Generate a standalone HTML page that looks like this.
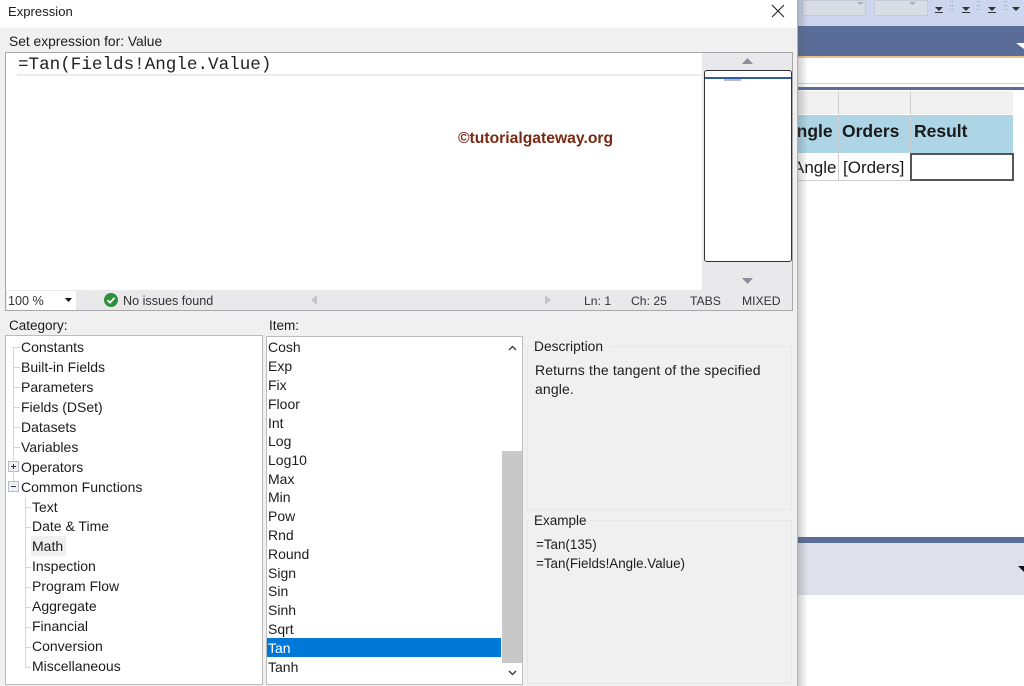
<!DOCTYPE html>
<html><head><meta charset="utf-8"><style>
html,body{margin:0;padding:0;width:1024px;height:686px;overflow:hidden;background:#fff;font-family:"Liberation Sans",sans-serif;color:#1c1c1c}
div,span{position:absolute;box-sizing:border-box}
.t{white-space:nowrap;font-size:14px;line-height:18px}
.c{left:21px}.s{left:32px}.i{left:268px}
.m{font-family:"Liberation Sans",sans-serif;font-weight:bold;font-size:17.5px;line-height:20px;height:20px;white-space:nowrap;color:#1a1a1a}
.r{font-weight:normal;font-size:17px}
.st{font-size:12.2px;color:#333;top:292px}
</style></head><body>
<!-- background app -->
<div style="left:798px;top:0;width:226px;height:26px;background:#ccd6ee"></div>
<div style="left:802px;top:0;width:64px;height:16px;background:#d9dde6;border:1px solid #c4cad8"></div>
<div style="left:874px;top:0;width:54px;height:16px;background:#d9dde6;border:1px solid #c4cad8"></div>
<svg style="position:absolute;left:854px;top:1px" width="70" height="5"><path d="M3 1h7L6.500 4zM55 1h7L58.500 4z" fill="#a8adb8"/></svg>
<svg style="position:absolute;left:930px;top:0" width="94" height="16"><g fill="#333"><path d="M5 7h8l-4 4zM32 7h8l-4 4zM58 7h8l-4 4zM82 7h8l-4 4z"/><rect x="5" y="12" width="8" height="1"/><rect x="32" y="12" width="8" height="1"/><rect x="58" y="12" width="8" height="1"/></g><g fill="#99a"><rect x="20" y="1" width="1" height="1"/><rect x="22" y="1" width="1" height="1"/><rect x="20" y="5" width="1" height="1"/><rect x="22" y="5" width="1" height="1"/><rect x="20" y="9" width="1" height="1"/><rect x="22" y="9" width="1" height="1"/><rect x="47" y="1" width="1" height="1"/><rect x="49" y="1" width="1" height="1"/><rect x="47" y="5" width="1" height="1"/><rect x="49" y="5" width="1" height="1"/><rect x="47" y="9" width="1" height="1"/><rect x="49" y="9" width="1" height="1"/><rect x="74" y="1" width="1" height="1"/><rect x="76" y="1" width="1" height="1"/><rect x="74" y="5" width="1" height="1"/><rect x="76" y="5" width="1" height="1"/><rect x="74" y="9" width="1" height="1"/><rect x="76" y="9" width="1" height="1"/></g></svg>
<div style="left:798px;top:26px;width:226px;height:30px;background:#5a6c98"></div>
<div style="left:798px;top:56px;width:226px;height:2px;background:#e8c48a"></div>
<svg style="position:absolute;left:1016px;top:43px" width="8" height="7"><path d="M0 0h8v6z" fill="#fff"/></svg>
<div style="left:798px;top:83px;width:226px;height:1px;background:#d4d4d4"></div>
<div style="left:798px;top:87px;width:226px;height:3px;background:#5a6c98"></div>
<div style="left:798px;top:91px;width:40px;height:23px;background:#f0f0f0"></div>
<div style="left:839px;top:91px;width:71px;height:23px;background:#f0f0f0"></div>
<div style="left:911px;top:91px;width:102px;height:23px;background:#f0f0f0"></div>
<div style="left:798px;top:115px;width:215px;height:38px;background:#add5e6"></div>
<div style="left:838px;top:91px;width:1px;height:89px;background:#cfcfcf"></div>
<div style="left:910px;top:91px;width:1px;height:62px;background:#cfcfcf"></div>
<div style="left:798px;top:180px;width:112px;height:1px;background:#cfcfcf"></div>
<div class="m" style="left:798px;top:121px;width:38px;overflow:hidden"><span style="left:-14px;top:0">Angle</span></div>
<div class="m" style="left:842px;top:121px">Orders</div>
<div class="m" style="left:914px;top:121px">Result</div>
<div class="m r" style="left:798px;top:158px;width:38px;overflow:hidden"><span style="left:-5px;top:0">Angle</span></div>
<div class="m r" style="left:843px;top:158px">[Orders]</div>
<div style="left:910px;top:153px;width:104px;height:28px;background:#fff;border:2px solid #555"></div>
<div style="left:798px;top:537px;width:226px;height:6px;background:#5a6c98"></div>
<div style="left:798px;top:543px;width:226px;height:52px;background:#dee1ea"></div>
<svg style="position:absolute;left:1018px;top:566px" width="6" height="7"><path d="M0 0h6v6z" fill="#111"/></svg>
<!-- dialog shadow -->
<div style="left:796px;top:0;width:12px;height:686px;background:linear-gradient(90deg,rgba(90,90,90,.35),rgba(150,150,150,0))"></div>
<!-- dialog -->
<div style="left:0;top:0;width:798px;height:686px;background:#f0f0f0;border-right:1px solid #b0b0b0"></div>
<div style="left:0;top:0;width:797px;height:28px;background:#fff"></div>
<div class="t" style="left:8px;top:3px;font-size:13.1px">Expression</div>
<svg style="position:absolute;left:771px;top:4px" width="14" height="14"><path d="M1 1L13 13M13 1L1 13" stroke="#222" stroke-width="1.1" fill="none"/></svg>
<div class="t" style="left:9px;top:33px;font-size:13.8px">Set expression for: Value</div>
<!-- editor -->
<div style="left:5px;top:52px;width:788px;height:259px;background:#fff;border:1px solid #a8a8a8"></div>
<div style="left:17px;top:54px;width:685px;height:22px;background:#fff;border-bottom:2px solid #ececec"></div>
<div style="left:18px;top:55px;font-family:'Liberation Mono',monospace;font-size:17.6px;line-height:20px;white-space:nowrap;color:#222">=Tan(Fields!Angle.Value)</div>
<div style="left:702px;top:53px;width:90px;height:237px;background:#e9e9ec"></div>
<div style="left:702px;top:262px;width:90px;height:28px;background:#e9e9ec"></div>
<svg style="position:absolute;left:741px;top:57px" width="13" height="8"><path d="M1 7L6.500 1L12 7z" fill="#8a8f99"/></svg>
<svg style="position:absolute;left:741px;top:277px" width="13" height="8"><path d="M1 1L6.500 7L12 1z" fill="#8a8f99"/></svg>
<div style="left:704px;top:70px;width:88px;height:192px;background:#fff;border:1px solid #333;border-radius:3px"></div>
<div style="left:705px;top:77px;width:86px;height:2px;background:#2f5da8"></div>
<div style="left:724px;top:79px;width:17px;height:2px;background:#b5b8c8"></div>
<!-- status -->
<div style="left:6px;top:290px;width:786px;height:20px;background:#e9e9ec"></div>
<div style="left:7px;top:291px;width:69px;height:19px;background:#fff"></div>
<div class="t" style="left:8px;top:292px;font-size:12.6px;color:#333">100 %</div>
<svg style="position:absolute;left:65px;top:298px" width="8" height="5"><path d="M0 0h7l-3.500 4z" fill="#111"/></svg>
<svg style="position:absolute;left:104px;top:293px" width="14" height="14"><circle cx="7" cy="7" r="7" fill="#2d8f3c"/><path d="M3.500 7.200L6 9.700L10.500 4.800" stroke="#fff" stroke-width="1.800" fill="none"/></svg>
<div class="t" style="left:123px;top:292px;font-size:12.6px;color:#333">No issues found</div>
<svg style="position:absolute;left:311px;top:295px" width="7" height="10"><path d="M6 0v10L0 5z" fill="#c4c4c8"/></svg>
<svg style="position:absolute;left:545px;top:295px" width="7" height="10"><path d="M0 0v10L6 5z" fill="#c4c4c8"/></svg>
<div class="t st" style="left:584px">Ln: 1</div>
<div class="t st" style="left:631px">Ch: 25</div>
<div class="t st" style="left:690px">TABS</div>
<div class="t st" style="left:742px">MIXED</div>
<!-- labels -->
<div class="t" style="left:9px;top:317px;font-size:13.5px">Category:</div>
<div class="t" style="left:269px;top:317px;font-size:13.5px">Item:</div>
<!-- category tree -->
<div style="left:5px;top:335px;width:258px;height:350px;background:#fff;border:1px solid #bcbcbc"></div>
<div style="left:13px;top:347px;width:1px;height:135px;background:#d6d6d6"></div>
<div style="left:25px;top:497px;width:1px;height:171px;background:#d6d6d6"></div>
<div style="left:13px;top:347px;width:7px;height:1px;background:#d6d6d6"></div>
<div style="left:13px;top:367px;width:7px;height:1px;background:#d6d6d6"></div>
<div style="left:13px;top:387px;width:7px;height:1px;background:#d6d6d6"></div>
<div style="left:13px;top:407px;width:7px;height:1px;background:#d6d6d6"></div>
<div style="left:13px;top:427px;width:7px;height:1px;background:#d6d6d6"></div>
<div style="left:13px;top:447px;width:7px;height:1px;background:#d6d6d6"></div>
<div style="left:25px;top:507px;width:6px;height:1px;background:#d6d6d6"></div>
<div style="left:25px;top:527px;width:6px;height:1px;background:#d6d6d6"></div>
<div style="left:25px;top:567px;width:6px;height:1px;background:#d6d6d6"></div>
<div style="left:25px;top:587px;width:6px;height:1px;background:#d6d6d6"></div>
<div style="left:25px;top:607px;width:6px;height:1px;background:#d6d6d6"></div>
<div style="left:25px;top:627px;width:6px;height:1px;background:#d6d6d6"></div>
<div style="left:25px;top:647px;width:6px;height:1px;background:#d6d6d6"></div>
<div style="left:25px;top:667px;width:6px;height:1px;background:#d6d6d6"></div>
<svg style="position:absolute;left:8px;top:461px" width="11" height="11"><rect x=".5" y=".5" width="10" height="10" fill="#eef0f5" stroke="#b8bcc8"/><path d="M3 5.500h5M5.500 3v5" stroke="#333"/></svg>
<svg style="position:absolute;left:8px;top:481px" width="11" height="11"><rect x=".5" y=".5" width="10" height="10" fill="#eef0f5" stroke="#b8bcc8"/><path d="M3 5.500h5" stroke="#333"/></svg>
<div style="left:31px;top:536px;width:35px;height:20px;background:#f0f0f0"></div>
<div class="t c" style="top:338px">Constants</div>
<div class="t c" style="top:358px">Built-in Fields</div>
<div class="t c" style="top:378px">Parameters</div>
<div class="t c" style="top:398px">Fields (DSet)</div>
<div class="t c" style="top:418px">Datasets</div>
<div class="t c" style="top:438px">Variables</div>
<div class="t c" style="top:458px">Operators</div>
<div class="t c" style="top:478px">Common Functions</div>
<div class="t s" style="top:498px">Text</div>
<div class="t s" style="top:517px">Date &amp; Time</div>
<div class="t s" style="top:537px">Math</div>
<div class="t s" style="top:557px">Inspection</div>
<div class="t s" style="top:577px">Program Flow</div>
<div class="t s" style="top:597px">Aggregate</div>
<div class="t s" style="top:617px">Financial</div>
<div class="t s" style="top:637px">Conversion</div>
<div class="t s" style="top:657px">Miscellaneous</div>
<!-- item list -->
<div style="left:266px;top:336px;width:257px;height:349px;background:#fff;border:1px solid #bcbcbc"></div>
<div style="left:502px;top:451px;width:20px;height:212px;background:#c8c8c8"></div>
<svg style="position:absolute;left:508px;top:345px" width="9" height="6"><path d="M1 5L4.500 1.500L8 5" stroke="#333" stroke-width="1.300" fill="none"/></svg>
<svg style="position:absolute;left:508px;top:670px" width="9" height="6"><path d="M1 1L4.500 4.500L8 1" stroke="#333" stroke-width="1.300" fill="none"/></svg>
<div style="left:267px;top:638px;width:234px;height:19px;background:#0078d7"></div>
<div class="t i" style="top:338px">Cosh</div>
<div class="t i" style="top:357px">Exp</div>
<div class="t i" style="top:376px">Fix</div>
<div class="t i" style="top:395px">Floor</div>
<div class="t i" style="top:414px">Int</div>
<div class="t i" style="top:432px">Log</div>
<div class="t i" style="top:451px">Log10</div>
<div class="t i" style="top:470px">Max</div>
<div class="t i" style="top:488px">Min</div>
<div class="t i" style="top:507px">Pow</div>
<div class="t i" style="top:526px">Rnd</div>
<div class="t i" style="top:545px">Round</div>
<div class="t i" style="top:564px">Sign</div>
<div class="t i" style="top:582px">Sin</div>
<div class="t i" style="top:601px">Sinh</div>
<div class="t i" style="top:620px">Sqrt</div>
<div class="t i" style="top:639px;color:#fff">Tan</div>
<div class="t i" style="top:658px">Tanh</div>
<!-- description -->
<div style="left:527px;top:346px;width:265px;height:164px;border:1px solid #e6e6e6"></div>
<div style="left:530px;top:340px;width:80px;height:12px;background:#f0f0f0"></div>
<div class="t" style="left:534px;top:338px;font-size:13.8px">Description</div>
<div class="t" style="left:535px;top:361px;line-height:19px;letter-spacing:.13px">Returns the tangent of the specified<br>angle.</div>
<div style="left:527px;top:520px;width:265px;height:164px;border:1px solid #e6e6e6"></div>
<div style="left:530px;top:514px;width:60px;height:12px;background:#f0f0f0"></div>
<div class="t" style="left:534px;top:512px;font-size:13.5px">Example</div>
<div class="t" style="left:536px;top:535px;font-size:13.4px;line-height:19px">=Tan(135)<br>=Tan(Fields!Angle.Value)</div>
<!-- watermark -->
<div style="left:458px;top:130px;font-weight:bold;font-size:15.7px;line-height:18px;color:#7a2a14;white-space:nowrap">©tutorialgateway.org</div>
</body></html>
